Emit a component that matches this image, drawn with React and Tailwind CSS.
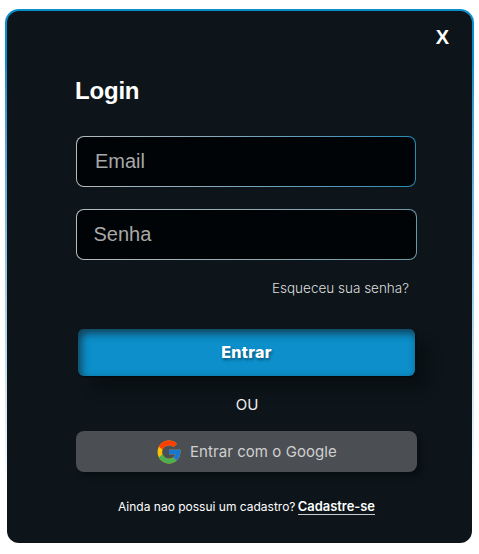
import React from "react";

function GoogleIcon() {
  return (
    <svg viewBox="3 3 42 42" className="block h-6 w-6 shrink-0">
      <path fill="#FFC107" d="M43.611 20.083H42V20H24v8h11.303c-1.649 4.657-6.08 8-11.303 8-6.627 0-12-5.373-12-12s5.373-12 12-12c3.059 0 5.842 1.154 7.961 3.039l5.657-5.657C34.046 6.053 29.268 4 24 4 12.955 4 4 12.955 4 24s8.955 20 20 20 20-8.955 20-20c0-1.341-.138-2.65-.389-3.917z" />
      <path fill="#FF3D00" d="M6.306 14.691l6.571 4.819C14.655 15.108 18.961 12 24 12c3.059 0 5.842 1.154 7.961 3.039l5.657-5.657C34.046 6.053 29.268 4 24 4 16.318 4 9.656 8.337 6.306 14.691z" />
      <path fill="#4CAF50" d="M24 44c5.166 0 9.86-1.977 13.409-5.192l-6.19-5.238C29.211 35.091 26.715 36 24 36c-5.202 0-9.619-3.317-11.283-7.946l-6.522 5.025C9.505 39.556 16.227 44 24 44z" />
      <path fill="#1976D2" d="M43.611 20.083H42V20H24v8h11.303a12.04 12.04 0 0 1-4.087 5.571l.003-.002 6.19 5.238C36.971 39.205 44 34 44 24c0-1.341-.138-2.65-.389-3.917z" />
    </svg>
  );
}

export default function App() {
  return (
    <div className="h-[554px] w-[479px] overflow-hidden bg-white pt-[9px] pl-[5px] font-['Inter',sans-serif]">
      <div className="h-[534px] w-[469px] rounded-[14px] bg-linear-to-b from-[#0b8fca] from-10% to-white to-90% px-[2px] pt-[2px]">
        <main className="flex h-[532px] flex-col rounded-[12px] bg-[#0d151a]">
          <button className="mt-[14px] mr-[23px] h-6 self-end font-['Liberation_Sans',sans-serif] text-[20px] leading-6 font-bold text-white">X</button>
          <h1 className="mt-[28px] ml-[68px] font-['Liberation_Sans',sans-serif] text-[24px] leading-7 font-bold tracking-[-0.2px] text-white">Login</h1>

          <div className="mt-[31px] ml-[69px] h-[51px] w-[340px] rounded-[8px] bg-linear-to-r from-[#b5bcbe] to-[#258bb6] p-px">
            <input aria-label="Email" placeholder="Email" className="block h-full w-full rounded-[7px] bg-[#000406] px-[18px] font-['Liberation_Sans',sans-serif] text-[20px] outline-none placeholder:text-[#a8a8a8]" />
          </div>
          <div className="mt-[22px] ml-[69px] h-[51px] w-[341px] rounded-[8px] bg-linear-to-r from-[#b5bcbe] to-[#6c98a5] p-px">
            <input aria-label="Senha" type="text" placeholder="Senha" className="block h-full w-full rounded-[7px] bg-[#000406] px-[16.5px] font-['Liberation_Sans',sans-serif] text-[20px] outline-none placeholder:text-[#a8a8a8]" />
          </div>

          <a className="mt-[18px] mr-[63px] self-end text-[13.5px] leading-5 font-light text-[#dedede]">Esqueceu sua senha?</a>

          <button className="mt-[31px] ml-[71px] h-[47px] w-[337px] rounded-[6px] bg-[#0c8fca] pb-px text-[16px] font-extrabold tracking-[0.3px] text-white shadow-[14px_14px_12px_rgba(2,8,8,0.35),1px_1px_2px_rgba(0,0,0,0.7),inset_3px_4px_8px_rgba(20,25,30,0.7)] [text-shadow:1px_2px_3px_rgba(0,0,0,0.4)]">Entrar</button>

          <p className="mt-[19px] ml-[15px] text-center text-[15px] leading-5 text-[#eeeeee]">OU</p>

          <button className="mt-[16px] ml-[69px] flex h-[41px] w-[341px] items-center rounded-[8px] bg-[#4b4e52] pl-[81px] text-[15px] text-[#d0d0d0] shadow-[4px_4px_5px_rgba(2,10,10,0.5)]">
            <GoogleIcon />
            <span className="ml-[9px] pt-px tracking-[0.06px]">Entrar com o Google</span>
          </button>

          <p className="mt-[26px] ml-[111px] text-[12px] leading-[18px] whitespace-nowrap text-white">
            Ainda nao possui um cadastro?{" "}
            <a className="-ml-px inline-block h-4 border-b border-[#c8cccd] text-[12.9px] leading-4 font-semibold">Cadastre-se</a>
          </p>
        </main>
      </div>
    </div>
  );
}
